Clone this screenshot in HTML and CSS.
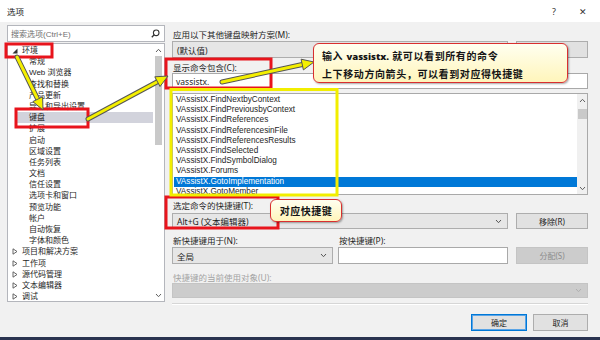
FILE: index.html
```html
<!DOCTYPE html>
<html lang="zh-CN">
<head>
<meta charset="utf-8">
<title>选项</title>
<link rel="stylesheet" href="styles.css">
</head>
<body>
<div class="window">
  <div class="titlebar">
    <span class="title">选项</span>
    <span class="tb-btns"><span class="tb-help">?</span><span class="tb-close">✕</span></span>
  </div>
  <div class="main">
    <div class="left">
      <div class="search">
        <span class="ph">搜索选项(Ctrl+E)</span>
        <svg class="mag" width="9" height="9" viewBox="0 0 9 9"><circle cx="5.2" cy="3.8" r="2.8" fill="none" stroke="#333" stroke-width="1.1"/><line x1="3.2" y1="5.8" x2="0.8" y2="8.2" stroke="#333" stroke-width="1.3"/></svg>
      </div>
      <div class="tree">
        <ul class="tree-list">
          <li class="top"><svg class="tw" width="6" height="6" viewBox="0 0 6 6"><polygon points="5.5,0.5 5.5,5.5 0.5,5.5" fill="#333"/></svg>环境</li>
          <li class="child">常规</li>
          <li class="child">Web 浏览器</li>
          <li class="child">查找和替换</li>
          <li class="child">产品更新</li>
          <li class="child">导入和导出设置</li>
          <li class="child sel">键盘</li>
          <li class="child">扩展</li>
          <li class="child">启动</li>
          <li class="child">区域设置</li>
          <li class="child">任务列表</li>
          <li class="child">文档</li>
          <li class="child">信任设置</li>
          <li class="child">选项卡和窗口</li>
          <li class="child">预览功能</li>
          <li class="child">帐户</li>
          <li class="child">自动恢复</li>
          <li class="child">字体和颜色</li>
          <li class="top"><svg class="tw" width="6" height="7" viewBox="0 0 6 7"><polygon points="1,0.8 5,3.5 1,6.2" fill="none" stroke="#555" stroke-width="0.9"/></svg>项目和解决方案</li>
          <li class="top"><svg class="tw" width="6" height="7" viewBox="0 0 6 7"><polygon points="1,0.8 5,3.5 1,6.2" fill="none" stroke="#555" stroke-width="0.9"/></svg>工作项</li>
          <li class="top"><svg class="tw" width="6" height="7" viewBox="0 0 6 7"><polygon points="1,0.8 5,3.5 1,6.2" fill="none" stroke="#555" stroke-width="0.9"/></svg>源代码管理</li>
          <li class="top"><svg class="tw" width="6" height="7" viewBox="0 0 6 7"><polygon points="1,0.8 5,3.5 1,6.2" fill="none" stroke="#555" stroke-width="0.9"/></svg>文本编辑器</li>
          <li class="top"><svg class="tw" width="6" height="7" viewBox="0 0 6 7"><polygon points="1,0.8 5,3.5 1,6.2" fill="none" stroke="#555" stroke-width="0.9"/></svg>调试</li>
        </ul>
        <div class="vscroll tree-scroll">
          <svg class="chev" width="7" height="5" viewBox="0 0 7 5"><polyline points="1,4 3.5,1.3 6,4" fill="none" stroke="#606060" stroke-width="1"/></svg>
          <div class="thumb tree-thumb"></div>
          <div class="spacer"></div>
          <svg class="chev" width="7" height="5" viewBox="0 0 7 5"><polyline points="1,1 3.5,3.7 6,1" fill="none" stroke="#606060" stroke-width="1"/></svg>
        </div>
      </div>
    </div>

    <div class="right">
      <div class="lbl l1">应用以下其他键盘映射方案(M):</div>
      <div class="row r1">
        <div class="combo c-wide"><span>(默认值)</span><svg width="7" height="5" viewBox="0 0 7 5"><polyline points="1,1 3.5,3.7 6,1" fill="none" stroke="#555" stroke-width="1"/></svg></div>
        <div class="btn">重置</div>
      </div>
      <div class="lbl l2">显示命令包含(C):</div>
      <div class="input in-full">vassistx.</div>
      <div class="listbox">
        <ul class="cmd-list">
          <li>VAssistX.FindNextbyContext</li>
          <li>VAssistX.FindPreviousbyContext</li>
          <li>VAssistX.FindReferences</li>
          <li>VAssistX.FindReferencesinFile</li>
          <li>VAssistX.FindReferencesResults</li>
          <li>VAssistX.FindSelected</li>
          <li>VAssistX.FindSymbolDialog</li>
          <li>VAssistX.Forums</li>
          <li class="sel">VAssistX.GotoImplementation</li>
          <li>VAssistX.GotoMember</li>
        </ul>
        <div class="vscroll list-scroll">
          <svg class="chev" width="7" height="5" viewBox="0 0 7 5"><polyline points="1,4 3.5,1.3 6,4" fill="none" stroke="#606060" stroke-width="1"/></svg>
          <div class="thumb list-thumb"></div>
          <div class="spacer"></div>
          <svg class="chev" width="7" height="5" viewBox="0 0 7 5"><polyline points="1,1 3.5,3.7 6,1" fill="none" stroke="#606060" stroke-width="1"/></svg>
        </div>
      </div>
      <div class="lbl l3">选定命令的快捷键(T):</div>
      <div class="row r3">
        <div class="combo c-wide"><span>Alt+G (文本编辑器)</span><svg width="7" height="5" viewBox="0 0 7 5"><polyline points="1,1 3.5,3.7 6,1" fill="none" stroke="#555" stroke-width="1"/></svg></div>
        <div class="btn">移除(R)</div>
      </div>
      <div class="grid4">
        <div class="lbl">新快捷键用于(N):</div>
        <div class="lbl">按快捷键(P):</div>
        <div></div>
        <div class="combo"><span>全局</span><svg width="7" height="5" viewBox="0 0 7 5"><polyline points="1,1 3.5,3.7 6,1" fill="none" stroke="#555" stroke-width="1"/></svg></div>
        <div class="input in-key"></div>
        <div class="btn disabled">分配(S)</div>
      </div>
      <div class="lbl lbl-dis l5">快捷键的当前使用对象(U):</div>
      <div class="combo combo-dis"><span></span><svg width="7" height="5" viewBox="0 0 7 5"><polyline points="1,1 3.5,3.7 6,1" fill="none" stroke="#b0b0b0" stroke-width="1"/></svg></div>
      <div class="sep"></div>
      <div class="footer">
        <div class="btn btn-ok">确定</div>
        <div class="btn btn-cancel">取消</div>
      </div>
    </div>
  </div>
</div>

<svg class="overlay" width="600" height="340" viewBox="0 0 600 340">
  <g fill="none" stroke="#e8141c" stroke-width="3">
    <rect x="6" y="44" width="46" height="13"/>
    <rect x="16" y="109" width="72" height="18"/>
    <rect x="166" y="59" width="105" height="29"/>
    <rect x="166" y="197" width="112" height="31"/>
  </g>
  <rect x="171" y="89.5" width="166" height="105.5" fill="none" stroke="#f2ee00" stroke-width="3"/>
  <g stroke-linecap="round">
    <line x1="17" y1="57" x2="37.7" y2="99.2" stroke="#555" stroke-width="5"/>
    <line x1="17" y1="57" x2="37.7" y2="99.2" stroke="#f4ef00" stroke-width="3"/>
    <line x1="88" y1="119" x2="157.4" y2="81.7" stroke="#555" stroke-width="5"/>
    <line x1="88" y1="119" x2="157.4" y2="81.7" stroke="#f4ef00" stroke-width="3"/>
    <line x1="222" y1="82" x2="302.3" y2="64.5" stroke="#555" stroke-width="5"/>
    <line x1="222" y1="82" x2="302.3" y2="64.5" stroke="#f4ef00" stroke-width="3"/>
  </g>
  <g fill="#f4ef00" stroke="#555" stroke-width="1" stroke-linejoin="round">
    <polygon points="43,110 32.8,101.6 42.6,96.8"/>
    <polygon points="168,76 160,86.5 154.8,76.8"/>
    <polygon points="314,62 303.4,69.9 301.1,59.2"/>
  </g>
</svg>

<div class="callout callout-1">
  <div class="cl-line">输入 <b class="kw">vassistx.</b> 就可以看到所有的命令</div>
  <div class="cl-line">上下移动方向箭头，可以看到对应得快捷键</div>
</div>
<div class="callout callout-2">对应快捷键</div>
</body>
</html>
```

FILE: styles.css
```css
* { box-sizing: border-box; margin: 0; padding: 0; }
html, body { width: 600px; height: 340px; overflow: hidden; }
body {
  background: #2a3350;
  font-family: "Noto Sans", "Noto Sans CJK SC", sans-serif;
  font-size: 8.5px;
  color: #1e1e1e;
  position: relative;
}
ul { list-style: none; }

.window {
  width: 600px;
  height: 337px;
  background: #f1f1f1;
  display: flex;
  flex-direction: column;
}

.titlebar {
  height: 22px;
  background: #fff;
  display: flex;
  align-items: center;
  padding-left: 7px;
  flex: none;
}
.title { font-size: 8.5px; color: #222; }
.tb-btns {
  margin-left: auto;
  display: flex;
  gap: 19px;
  padding-right: 12px;
  color: #333;
}
.tb-help, .tb-close { width: 10px; text-align: center; font-size: 9px; }

.main {
  display: flex;
  gap: 7px;
  padding: 3px 12px 0 7px;
  flex: 1;
}

.left { width: 158px; display: flex; flex-direction: column; }
.search {
  height: 17px;
  background: #fff;
  border: 1px solid #b4b6bc;
  display: flex;
  align-items: center;
  justify-content: space-between;
  padding: 0 4px 0 3px;
}
.ph { color: #707070; font-size: 8px; font-family: "Liberation Sans", "Noto Sans CJK SC", sans-serif; }
.tree {
  margin-top: 1px;
  height: 259px;
  background: #fff;
  border: 1px solid #b4b6bc;
  display: flex;
}
.tree-list {
  flex: 1;
  padding-top: 1px;
  font-family: "Liberation Sans", "Noto Sans CJK SC", sans-serif;
  font-size: 8px;
}
.tree-list li {
  height: 11.2px;
  line-height: 11.2px;
  white-space: nowrap;
  display: flex;
  align-items: center;
}
.tree-list .top { padding-left: 4px; }
.tree-list .tw { margin-right: 4px; flex: none; }
.tree-list .child { padding-left: 21px; }
.tree-list .sel { background: #d2d3dc; margin-left: 9px; padding-left: 12px; }

.vscroll {
  display: flex;
  flex-direction: column;
  align-items: center;
  background: #fff;
}
.tree-scroll { width: 11px; padding-top: 4px; padding-bottom: 3px; }
.thumb { background: #c9c9c9; }
.tree-thumb { width: 7px; height: 89px; margin-top: 3px; }
.spacer { flex: 1; }

.right { width: 416px; display: flex; flex-direction: column; }
.lbl { height: 11px; line-height: 11px; padding-left: 1px; white-space: nowrap; }
.l1 { margin-top: 4px; }
.row { display: flex; gap: 8px; }
.r1 { margin-top: 1px; height: 17px; }
.combo {
  background: #e6e6e6;
  border: 1px solid #adadad;
  display: flex;
  align-items: center;
  justify-content: space-between;
  padding: 0 5px 0 4px;
  white-space: nowrap;
}
.c-wide { width: 336px; }
.btn {
  width: 72px;
  background: #e1e1e1;
  border: 1px solid #adadad;
  display: flex;
  align-items: center;
  justify-content: center;
  font-size: 8px;
}
.btn.disabled { background: #cccccc; border-color: #c4c4c4; color: #8d8d8d; }
.l2 { margin-top: 4px; }
.input {
  background: #fff;
  border: 1px solid #a9a9a9;
  display: flex;
  align-items: center;
  padding-left: 3px;
}
.in-full { height: 16px; }
.listbox {
  margin-top: 4px;
  height: 102px;
  background: #fff;
  border: 1px solid #a9a9a9;
  display: flex;
}
.cmd-list { flex: 1; padding: 1px 0 0 1px; }
.cmd-list li {
  height: 10.2px;
  line-height: 10.2px;
  padding-left: 2px;
  font-family: "Liberation Sans", sans-serif;
  font-size: 8.2px;
  white-space: nowrap;
}
.cmd-list .sel { background: #0078d7; color: #fff; }
.list-scroll { width: 10px; background: #f0f0f0; padding-top: 4px; padding-bottom: 3px; }
.list-thumb { width: 9px; height: 10px; margin-top: 6px; }
.l3 { margin-top: 5px; }
.r3 { margin-top: 2px; height: 16px; }
.grid4 {
  margin-top: 6px;
  display: grid;
  grid-template-columns: 161px 170px 72px;
  grid-template-rows: 11px 17px;
  column-gap: 5px;
  row-gap: 1px;
}
.grid4 .btn { margin-left: 3px; }
.in-key { height: 17px; }
.lbl-dis { color: #a3a3a3; }
.l5 { margin-top: 9px; height: 10px; line-height: 10px; }
.combo-dis { height: 15px; background: #cccccc; border-color: #c4c4c4; }
.sep {
  margin-top: 5px;
  height: 2px;
  border-top: 1px solid #d6d6d6;
  border-bottom: 1px solid #fff;
}
.footer {
  margin-top: 9px;
  display: flex;
  justify-content: flex-end;
  gap: 6px;
}
.btn-ok { width: 56px; height: 17px; border: 1px solid #0078d7; box-shadow: inset 0 0 0 1px #5aa4e6; }
.btn-cancel { width: 55px; height: 17px; }

.overlay { position: absolute; left: 0; top: 0; pointer-events: none; }

.callout {
  position: absolute;
  border: 1px solid #d92f2f;
  border-radius: 6px;
  background: linear-gradient(#fffff0, #fff5bb);
  box-shadow: 1px 1px 2px rgba(0, 0, 0, 0.35);
  font-family: "Noto Sans", "Noto Sans CJK SC", sans-serif;
  font-weight: bold;
  font-size: 10px;
  color: #151515;
  white-space: nowrap;
}
.callout-1 {
  left: 313px;
  top: 43px;
  width: 255px;
  height: 40px;
  padding: 3px 0 0 8px;
  letter-spacing: 0.6px;
}
.kw { font-size: 9.5px; letter-spacing: 0; }
.cl-line { height: 18px; line-height: 18px; }
.callout-2 {
  left: 270px;
  top: 199px;
  width: 72px;
  height: 23px;
  display: flex;
  align-items: center;
  justify-content: center;
  letter-spacing: 0.5px;
}
```
